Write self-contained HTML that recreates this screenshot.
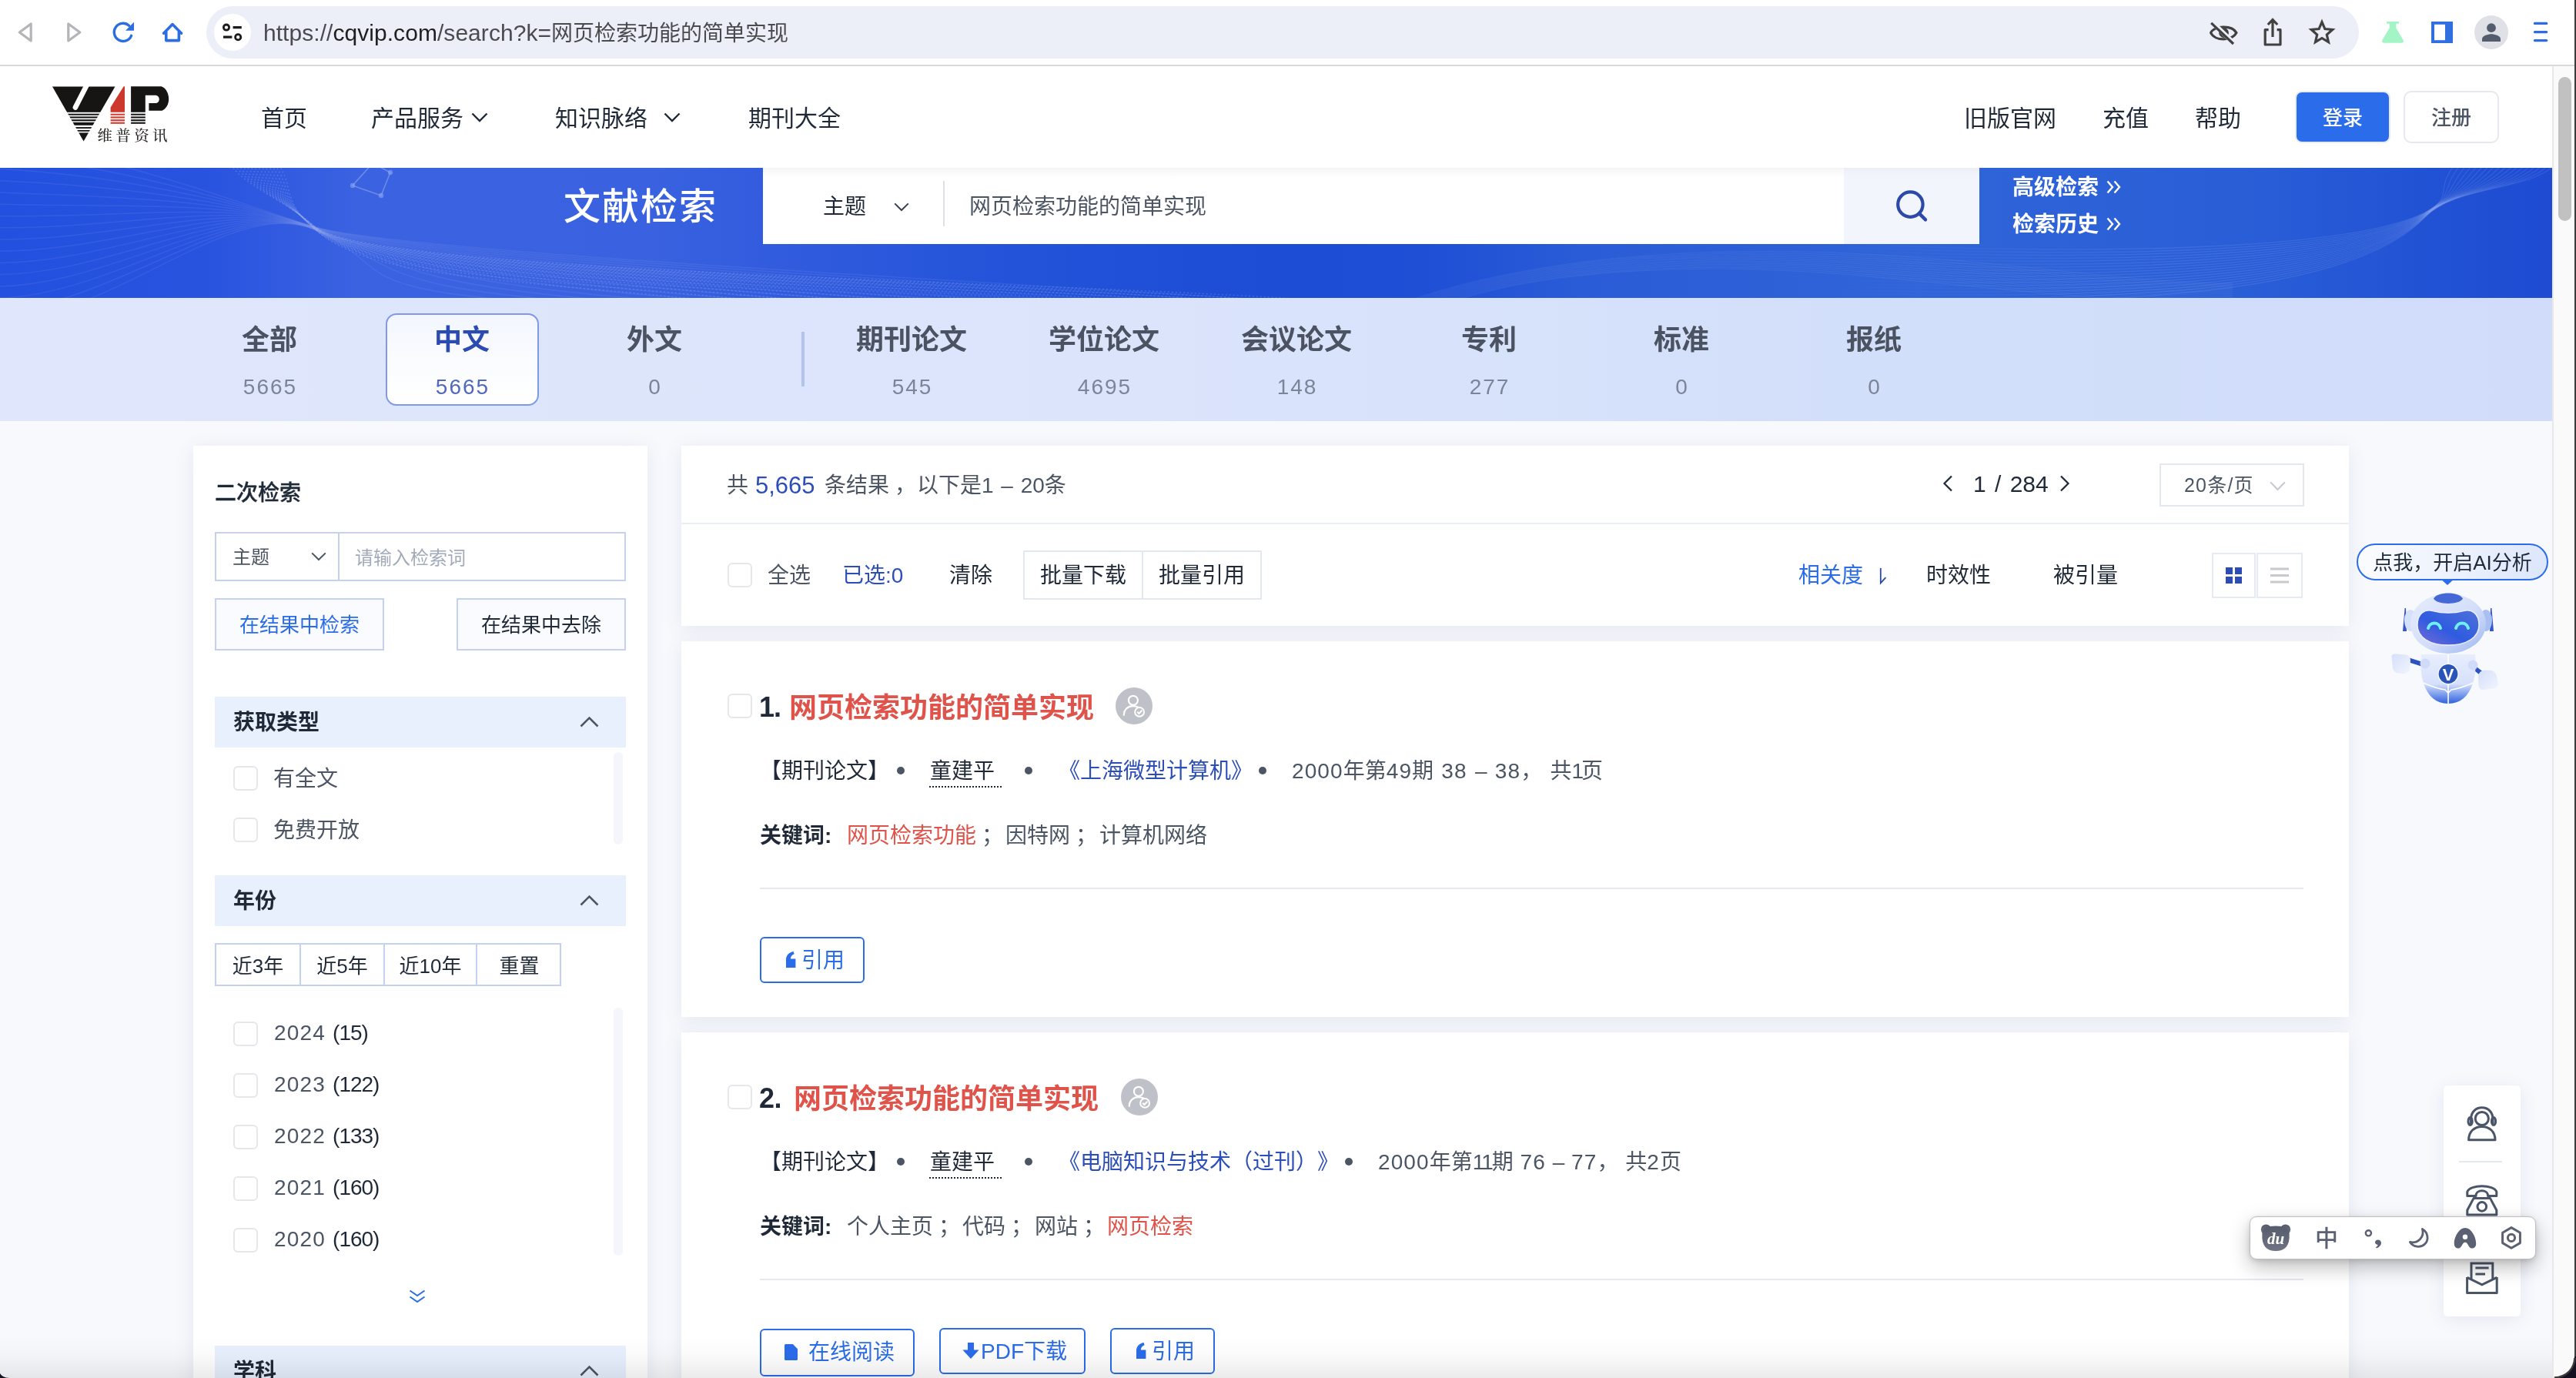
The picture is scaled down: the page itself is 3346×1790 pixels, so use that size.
<!DOCTYPE html>
<html lang="zh-CN">
<head>
<meta charset="utf-8">
<title>文献检索</title>
<style>
*{box-sizing:border-box;margin:0;padding:0}
html,body{width:3346px;height:1790px;overflow:hidden;background:#fff}
body{position:relative;font-family:"Liberation Sans","Noto Sans CJK SC",sans-serif;color:#1f2937;-webkit-font-smoothing:antialiased;text-spacing-trim:space-all;will-change:transform}
.abs{position:absolute}
.t{position:absolute;white-space:nowrap;line-height:40px;transform:translateY(-19px);font-size:28px}
.tc{position:absolute;white-space:nowrap;line-height:40px;transform:translate(-50%,-19px);font-size:28px;text-align:center}
svg{position:absolute;overflow:visible}
.dk{color:#1f2937}.md{color:#4b5563}.bl{color:#2a6cea}.db{color:#2b4eb8}.rd{color:#e0534a}
.n{letter-spacing:1.1px}.sep{margin:0 3px 0 7px}
.b{font-weight:700}.m{font-weight:500;-webkit-text-stroke:.3px currentColor}
.cb{position:absolute;width:32px;height:32px;border:2px solid #e5e7eb;border-radius:6px;background:#fff}
/* page bg */
#page{position:absolute;left:0;top:86px;width:3315px;height:1704px;background:#f8f9fd;overflow:hidden}
#chrome{position:absolute;left:0;top:0;width:3346px;height:86px;background:#fff}
#hdr{position:absolute;left:0;top:0;width:3315px;height:132px;background:#fff}
#banner{position:absolute;left:0;top:132px;width:3315px;height:169px;background:linear-gradient(90deg,#2350df 0%,#2853df 8%,#3a62e1 14%,#3a62e0 25%,#2f5add 32%,#2353d9 40%,#1d4cd5 50%,#1f4fd5 56%,#2a5cd7 62%,#3064d8 75%,#2a5ed7 88%,#2152d4 95%,#1e4bd2 100%);overflow:hidden}
#tabs{position:absolute;left:0;top:301px;width:3315px;height:160px;background:linear-gradient(90deg,#e0e7fc 0%,#dbe4fb 45%,#d2dffa 75%,#d0dcfa 100%)}
.card{position:absolute;background:#fff;box-shadow:0 4px 24px rgba(60,80,140,.10)}
</style>
</head>
<body>

<!-- ================= BROWSER CHROME ================= -->
<div id="chrome">
  <div class="abs" style="left:268px;top:8px;width:2796px;height:68px;border-radius:34px;background:#eceff8"></div>
  <div class="abs" style="left:278px;top:18px;width:48px;height:48px;border-radius:24px;background:#fff"></div>
  <div class="abs" style="left:0;top:84px;width:3346px;height:2px;background:#d9d9d9"></div>
  <div class="t" style="left:342px;top:42px;font-size:30px;color:#4a4b4e;letter-spacing:.05px">https://<span style="color:#1f1f1f">cqvip.com</span>/search?k=<span style="font-size:28px;letter-spacing:0">网页检索功能的简单实现</span></div>
  <svg id="chromeicons" style="left:0;top:0" width="3346" height="86" viewBox="0 0 3346 86" fill="none">
    <!-- back / forward -->
    <path d="M25.3 42 L40.2 31 V53 Z" stroke="#b4b5b8" stroke-width="3.2" stroke-linejoin="round"/>
    <path d="M103.8 42 L88.8 31 V53 Z" stroke="#b4b5b8" stroke-width="3.2" stroke-linejoin="round"/>
    <!-- reload -->
    <path d="M170.6 46.3 A11.6 11.6 0 1 1 167.6 33.2" stroke="#2c6de4" stroke-width="3.4" stroke-linecap="round"/>
    <path d="M174 28.8 V39.8 H163 Z" fill="#2c6de4"/>
    <!-- home -->
    <path d="M212.6 43.2 L224 31.6 L235.6 43.2" stroke="#2c6de4" stroke-width="3.6" stroke-linecap="round" stroke-linejoin="round"/>
    <path d="M215.8 41 V52.6 H232.4 V41" stroke="#2c6de4" stroke-width="3.6" stroke-linejoin="round"/>
    <!-- tune -->
    <circle cx="294" cy="35.6" r="3.6" stroke="#1b1b1b" stroke-width="2.8"/>
    <path d="M302.6 35.6 H313.8 M290 48.2 H301.4" stroke="#1b1b1b" stroke-width="3.2"/>
    <circle cx="309.2" cy="48.2" r="3.6" stroke="#1b1b1b" stroke-width="2.8"/>
    <!-- eye slash -->
    <path d="M2871.6 42.6 C2876 33.4 2899 32 2905 42.6 C2899 53.6 2877 53.6 2871.6 42.6 Z" stroke="#414141" stroke-width="3.2" stroke-linejoin="round"/>
    <circle cx="2888.5" cy="42.5" r="6.4" fill="#414141"/>
    <path d="M2873.4 28.6 L2902.4 57" stroke="#eceff8" stroke-width="6"/>
    <path d="M2872.2 29.8 L2901 57" stroke="#414141" stroke-width="3.2"/>
    <!-- share -->
    <path d="M2946.6 38.6 H2942.2 V58 H2962 V38.6 H2957.6" stroke="#414141" stroke-width="3.2" stroke-linejoin="round"/>
    <path d="M2952 48 V26.4 M2945.8 32 L2952 25.6 L2958.2 32" stroke="#414141" stroke-width="3.2"/>
    <!-- star -->
    <path d="M3016 28.6 L3019.9 37.6 L3029.7 38.5 L3022.3 45 L3024.5 54.6 L3016 49.5 L3007.5 54.6 L3009.7 45 L3002.3 38.5 L3012.1 37.6 Z" stroke="#414141" stroke-width="3.2" stroke-linejoin="miter"/>
    <!-- flask -->
    <path d="M3100 28 H3116 V30.8 H3112.4 V36.6 L3121.6 52 Q3123 55.8 3119 55.8 H3097 Q3093 55.8 3094.4 52 L3103.6 36.6 V30.8 H3100 Z" fill="#a4f5c6"/>
    <!-- side panel -->
    <rect x="3158" y="28" width="28" height="28" fill="#2f6fe0"/>
    <rect x="3162" y="31.8" width="14" height="20.4" fill="#fff"/>
    <!-- profile -->
    <circle cx="3236" cy="42" r="22" fill="#dfe1e6"/>
    <circle cx="3236" cy="36.2" r="5.9" fill="#545d6e"/>
    <path d="M3224 54 V50.4 C3224 46.4 3232 44.2 3236 44.2 C3240 44.2 3248 46.4 3248 50.4 V54 Z" fill="#545d6e"/>
    <!-- menu -->
    <path d="M3292.4 30.4 H3307.8 M3292.4 41.6 H3307.8 M3292.4 52.6 H3307.8" stroke="#2c6de4" stroke-width="3.2" stroke-linecap="round"/>
  </svg>
</div>

<!-- ================= PAGE ================= -->
<div id="page">
  <div id="hdr">
    <!-- logo : local coords = page(60,100) -> hdr(60,14) -->
    <svg style="left:60px;top:14px" width="170" height="95" viewBox="0 0 170 95">
      <defs><clipPath id="vclip"><path d="M7.9 12.3 H89.6 L48.6 83.6 Z"/></clipPath></defs>
      <g clip-path="url(#vclip)" fill="#161514">
        <rect x="0" y="12.3" width="100" height="33.5"/>
        <rect x="0" y="47.7" width="100" height="2.0"/>
        <rect x="0" y="51.4" width="100" height="2.1"/>
        <rect x="0" y="55.2" width="100" height="2.2"/>
        <rect x="0" y="58.9" width="100" height="3.9"/>
        <rect x="0" y="65.1" width="100" height="1.9"/>
        <rect x="0" y="68.9" width="100" height="1.9"/>
        <rect x="0" y="72.4" width="100" height="12"/>
      </g>
      <path d="M53 10 L37.9 39.6" stroke="#fff" stroke-width="6.6" stroke-linecap="round"/>
      <path d="M100.6 12.3 H102 V45.8 H83.6 V39.4 Z" fill="#cc382b"/>
      <g fill="#d23b2e"><rect x="83.6" y="47.7" width="18.4" height="2"/><rect x="83.6" y="51.4" width="18.4" height="2.1"/><rect x="83.6" y="55.2" width="18.4" height="2.1"/><rect x="83.6" y="58.7" width="18.4" height="2.1"/></g>
      <path d="M110.1 12.3 H149.6 C155.5 14.2 159.2 21.4 159.2 28.6 C159.2 35.8 155.6 41.6 150.4 43.8 H133.4 V34.1 H141.6 C144.6 34.1 146.8 31.8 146.8 28.9 C146.8 26 144.6 23.8 141.6 23.8 H128.8 V45.8 H110.1 Z" fill="#161514"/>
      <g fill="#161514"><rect x="110.1" y="47.7" width="18.7" height="2"/><rect x="110.1" y="51.4" width="18.7" height="2.1"/><rect x="110.1" y="55.2" width="18.7" height="2.1"/><rect x="110.1" y="58.7" width="18.7" height="2.1"/></g>
      <text x="66.4" y="83.4" font-family="'Noto Serif CJK SC','Liberation Serif',serif" font-size="19.5" letter-spacing="4.4" font-weight="500" fill="#2a2624">维普资讯</text>
    </svg>
    <div class="t dk" style="left:339px;top:67px;font-size:30px">首页</div>
    <div class="t dk" style="left:482px;top:67px;font-size:30px">产品服务</div>
    <svg style="left:612px;top:60px" width="22" height="13" viewBox="0 0 22 13" fill="none"><path d="M1.5 1.5 L11 11 L20.5 1.5" stroke="#1f2937" stroke-width="2.4"/></svg>
    <div class="t dk" style="left:721px;top:67px;font-size:30px">知识脉络</div>
    <svg style="left:862px;top:60px" width="22" height="13" viewBox="0 0 22 13" fill="none"><path d="M1.5 1.5 L11 11 L20.5 1.5" stroke="#1f2937" stroke-width="2.4"/></svg>
    <div class="t dk" style="left:972px;top:67px;font-size:30px">期刊大全</div>
    <div class="t dk" style="left:2551px;top:67px;font-size:30px">旧版官网</div>
    <div class="t dk" style="left:2731px;top:67px;font-size:30px">充值</div>
    <div class="t dk" style="left:2851px;top:67px;font-size:30px">帮助</div>
    <div class="abs" style="left:2981px;top:32px;width:124px;height:68px;border-radius:9px;background:#e6ebf5"></div>
    <div class="abs" style="left:2983px;top:34px;width:120px;height:64px;border-radius:7px;background:#2a6cea"></div>
    <div class="tc" style="left:3043px;top:66px;font-size:26px;font-weight:500;color:#fff">登录</div>
    <div class="abs" style="left:3122px;top:32px;width:124px;height:68px;border-radius:10px;background:#fff;border:2px solid #e5e8ec"></div>
    <div class="tc md" style="left:3184px;top:66px;font-size:26px;font-weight:500">注册</div>
  </div>
  <div id="banner">
    <svg style="left:0;top:0" width="3315" height="169" viewBox="0 0 3315 169" fill="none">
      <g stroke="#b9c9f8" stroke-opacity=".10" stroke-width="1.5">
      <path d="M-20 -30.0 C140 -24.0 300.0 44.0 410 77.0 C520.0 110.0 1330.0 150.0 1650.0 172.0"/>
      <path d="M-20 -14.7 C140 -8.7 300.0 43.2 410 77.3 C520.0 111.4 1270.0 150.7 1590.0 172.4"/>
      <path d="M-20 0.7 C140 6.7 300.0 42.3 410 77.5 C520.0 112.7 1210.0 151.3 1530.0 172.8"/>
      <path d="M-20 16.0 C140 22.0 300.0 41.5 410 77.8 C520.0 114.1 1150.0 152.0 1470.0 173.2"/>
      <path d="M-20 31.3 C140 37.3 300.0 40.7 410 78.1 C520.0 115.5 1090.0 152.7 1410.0 173.6"/>
      <path d="M-20 46.7 C140 52.7 300.0 39.8 410 78.3 C520.0 116.8 1030.0 153.3 1350.0 174.0"/>
      <path d="M-20 62.0 C140 68.0 300.0 39.0 410 78.6 C520.0 118.2 970.0 154.0 1290.0 174.4"/>
      <path d="M-20 77.3 C140 83.3 300.0 38.2 410 78.9 C520.0 119.6 910.0 154.7 1230.0 174.8"/>
      <path d="M-20 92.7 C140 98.7 300.0 37.3 410 79.1 C520.0 120.9 850.0 155.3 1170.0 175.2"/>
      <path d="M-20 108.0 C140 114.0 300.0 36.5 410 79.4 C520.0 122.3 790.0 156.0 1110.0 175.6"/>
      <path d="M-20 123.3 C140 129.3 300.0 35.7 410 79.7 C520.0 123.7 730.0 156.7 1050.0 176.0"/>
      <path d="M-20 138.7 C140 144.7 300.0 34.8 410 79.9 C520.0 125.0 670.0 157.3 990.0 176.4"/>
      <path d="M-20 154.0 C140 160.0 300.0 34.0 410 80.2 C520.0 126.4 610.0 158.0 930.0 176.8"/>
      <path d="M-20 169.3 C140 175.3 300.0 33.2 410 80.5 C520.0 127.8 550.0 158.7 870.0 177.2"/>
      <path d="M-20 184.7 C140 190.7 300.0 32.3 410 80.7 C520.0 129.1 490.0 159.3 810.0 177.6"/>
      <path d="M-20 200.0 C140 206.0 300.0 31.5 410 81.0 C520.0 130.5 430.0 160.0 750.0 178.0"/>
      </g>
      <g stroke="#c4d2fa" stroke-opacity=".20" stroke-width="1.6" stroke-dasharray="2 3">
      <path d="M300.0 -4 C320.0 25 365.0 38.8 410 77.0 C482.0 138.2 1430.0 148.0 1750.0 175"/>
      <path d="M304.8 -4 C324.8 25 365.0 39.1 410 77.3 C482.0 138.5 1368.5 147.5 1688.5 175"/>
      <path d="M309.5 -4 C329.5 25 365.0 39.4 410 77.6 C482.0 138.8 1306.9 147.1 1626.9 175"/>
      <path d="M314.3 -4 C334.3 25 365.0 39.7 410 77.9 C482.0 139.1 1245.4 146.6 1565.4 175"/>
      <path d="M319.1 -4 C339.1 25 365.0 40.0 410 78.2 C482.0 139.4 1183.8 146.2 1503.8 175"/>
      <path d="M323.8 -4 C343.8 25 365.0 40.3 410 78.5 C482.0 139.7 1122.3 145.7 1442.3 175"/>
      <path d="M328.6 -4 C348.6 25 365.0 40.6 410 78.8 C482.0 140.0 1060.8 145.2 1380.8 175"/>
      <path d="M333.4 -4 C353.4 25 365.0 40.9 410 79.2 C482.0 140.4 999.2 144.8 1319.2 175"/>
      <path d="M338.2 -4 C358.2 25 365.0 41.2 410 79.5 C482.0 140.7 937.7 144.3 1257.7 175"/>
      <path d="M342.9 -4 C362.9 25 365.0 41.5 410 79.8 C482.0 141.0 876.2 143.8 1196.2 175"/>
      <path d="M347.7 -4 C367.7 25 365.0 41.8 410 80.1 C482.0 141.3 814.6 143.4 1134.6 175"/>
      <path d="M352.5 -4 C372.5 25 365.0 42.1 410 80.4 C482.0 141.6 753.1 142.9 1073.1 175"/>
      <path d="M357.2 -4 C377.2 25 365.0 42.4 410 80.7 C482.0 141.9 691.5 142.5 1011.5 175"/>
      <path d="M362.0 -4 C382.0 25 365.0 42.8 410 81.0 C482.0 142.2 630.0 142.0 950.0 175"/>
      </g>
      <g stroke="#b4c8f6" stroke-opacity=".09" stroke-width="1.3">
      <path d="M1820.0 176 C1980.0 118.0 2200.0 100.0 2420.0 112.0 S2760.0 150.0 2900 150.0"/>
      <path d="M1825.5 176 C1983.6 118.9 2202.7 102.0 2421.8 114.7 S2760.0 152.4 2900 152.2"/>
      <path d="M1830.9 176 C1987.3 119.8 2205.5 104.0 2423.6 117.5 S2760.0 154.7 2900 154.4"/>
      <path d="M1836.4 176 C1990.9 120.7 2208.2 106.0 2425.5 120.2 S2760.0 157.1 2900 156.5"/>
      <path d="M1841.8 176 C1994.5 121.6 2210.9 108.0 2427.3 122.9 S2760.0 159.5 2900 158.7"/>
      <path d="M1847.3 176 C1998.2 122.5 2213.6 110.0 2429.1 125.6 S2760.0 161.8 2900 160.9"/>
      <path d="M1852.7 176 C2001.8 123.5 2216.4 112.0 2430.9 128.4 S2760.0 164.2 2900 163.1"/>
      <path d="M1858.2 176 C2005.5 124.4 2219.1 114.0 2432.7 131.1 S2760.0 166.5 2900 165.3"/>
      <path d="M1863.6 176 C2009.1 125.3 2221.8 116.0 2434.5 133.8 S2760.0 168.9 2900 167.5"/>
      <path d="M1869.1 176 C2012.7 126.2 2224.5 118.0 2436.4 136.5 S2760.0 171.3 2900 169.6"/>
      <path d="M1874.5 176 C2016.4 127.1 2227.3 120.0 2438.2 139.3 S2760.0 173.6 2900 171.8"/>
      <path d="M1880.0 176 C2020.0 128.0 2230.0 122.0 2440.0 142.0 S2760.0 176.0 2900 174.0"/>
      </g>
      <defs><linearGradient id="wcg" gradientUnits="userSpaceOnUse" x1="2380" y1="0" x2="2800" y2="0"><stop offset="0" stop-color="#b4c8f6" stop-opacity="0"/><stop offset="1" stop-color="#b4c8f6" stop-opacity="1"/></linearGradient></defs>
      <g stroke="url(#wcg)" stroke-opacity=".13" stroke-width="1.3">
      <path d="M2380 98.0 C2680 112.0 3040 112.0 3150 58.0 C3190 36.0 3160.0 30 3190.0 -6"/>
      <path d="M2380 102.4 C2680 115.8 3040 115.9 3150 58.4 C3190 35.2 3167.6 30 3197.6 -6"/>
      <path d="M2380 106.7 C2680 119.5 3040 119.8 3150 58.7 C3190 34.4 3175.3 30 3205.3 -6"/>
      <path d="M2380 111.1 C2680 123.3 3040 123.6 3150 59.1 C3190 33.5 3182.9 30 3212.9 -6"/>
      <path d="M2380 115.4 C2680 127.1 3040 127.5 3150 59.4 C3190 32.7 3190.6 30 3220.6 -6"/>
      <path d="M2380 119.8 C2680 130.8 3040 131.4 3150 59.8 C3190 31.9 3198.2 30 3228.2 -6"/>
      <path d="M2380 124.1 C2680 134.6 3040 135.3 3150 60.1 C3190 31.1 3205.9 30 3235.9 -6"/>
      <path d="M2380 128.5 C2680 138.4 3040 139.2 3150 60.5 C3190 30.2 3213.5 30 3243.5 -6"/>
      <path d="M2380 132.8 C2680 142.1 3040 143.1 3150 60.8 C3190 29.4 3221.2 30 3251.2 -6"/>
      <path d="M2380 137.2 C2680 145.9 3040 146.9 3150 61.2 C3190 28.6 3228.8 30 3258.8 -6"/>
      <path d="M2380 141.5 C2680 149.6 3040 150.8 3150 61.5 C3190 27.8 3236.5 30 3266.5 -6"/>
      <path d="M2380 145.9 C2680 153.4 3040 154.7 3150 61.9 C3190 26.9 3244.1 30 3274.1 -6"/>
      <path d="M2380 150.2 C2680 157.2 3040 158.6 3150 62.2 C3190 26.1 3251.8 30 3281.8 -6"/>
      <path d="M2380 154.6 C2680 160.9 3040 162.5 3150 62.6 C3190 25.3 3259.4 30 3289.4 -6"/>
      <path d="M2380 158.9 C2680 164.7 3040 166.4 3150 62.9 C3190 24.5 3267.1 30 3297.1 -6"/>
      <path d="M2380 163.3 C2680 168.5 3040 170.2 3150 63.3 C3190 23.6 3274.7 30 3304.7 -6"/>
      <path d="M2380 167.6 C2680 172.2 3040 174.1 3150 63.6 C3190 22.8 3282.4 30 3312.4 -6"/>
      <path d="M2380 172.0 C2680 176.0 3040 178.0 3150 64.0 C3190 22.0 3290.0 30 3320.0 -6"/>
      </g>
      <g stroke="#8ea5ee" stroke-opacity=".6" stroke-width="1.6" fill="#8ea5ee" fill-opacity=".6">
        <path d="M458 23 L495 36 L507 6 L484 -6 Z" fill="none"/>
        <circle cx="458" cy="23" r="3.2" stroke="none"/><circle cx="495" cy="36" r="3.2" stroke="none"/><circle cx="507" cy="6" r="3.2" stroke="none"/>
      </g>
    </svg>
    <div class="t" style="left:732px;top:51px;font-size:48px;font-weight:500;line-height:60px;transform:translateY(-30px);color:#fff;letter-spacing:2px">文献检索</div>
    <div class="abs" style="left:991px;top:0;width:1404px;height:99px;background:linear-gradient(180deg,#f5f5f7 0,#fbfbfc 7px,#fff 14px)"></div>
    <div class="abs" style="left:2395px;top:0;width:176px;height:99px;background:linear-gradient(180deg,#ebedf5 0,#f1f3fb 7px,#f3f5fd 14px)"></div>
    <div class="t dk" style="left:1069px;top:50px;font-size:28px">主题</div>
    <svg style="left:1161px;top:45px" width="20" height="12" viewBox="0 0 20 12" fill="none"><path d="M1.2 1.4 L10 10 L18.8 1.4" stroke="#374151" stroke-width="2"/></svg>
    <div class="abs" style="left:1225px;top:17px;width:2px;height:59px;background:#dde0e6"></div>
    <div class="t md" style="left:1259px;top:50px;font-size:28px">网页检索功能的简单实现</div>
    <svg style="left:2458px;top:24px" width="52" height="52" viewBox="0 0 52 52" fill="none"><circle cx="23.4" cy="23.6" r="16.2" stroke="#2c49a8" stroke-width="4.2"/><path d="M35 35.4 L43 43.4" stroke="#2c49a8" stroke-width="4.4" stroke-linecap="round"/></svg>
    <div class="t b" style="left:2614px;top:25px;font-size:28px;color:#fff">高级检索</div>
    <div class="t b" style="left:2614px;top:73px;font-size:28px;color:#fff">检索历史</div>
    <svg style="left:2736px;top:16px" width="20" height="18" viewBox="0 0 20 18" fill="none"><path d="M1.5 1.5 L8 9 L1.5 16.5 M10.5 1.5 L17 9 L10.5 16.5" stroke="#fff" stroke-width="2.4"/></svg>
    <svg style="left:2736px;top:64px" width="20" height="18" viewBox="0 0 20 18" fill="none"><path d="M1.5 1.5 L8 9 L1.5 16.5 M10.5 1.5 L17 9 L10.5 16.5" stroke="#fff" stroke-width="2.4"/></svg>
  </div>
  <div id="tabs">
    <div class="abs" style="left:501px;top:20px;width:199px;height:120px;border-radius:14px;border:2px solid #7f98ec;background:linear-gradient(180deg,#f3f6fe 0%,#fbfcff 55%,#fff 100%)"></div>
    <div class="abs" style="left:1041px;top:44px;width:4px;height:71px;background:#b6c2ee"></div>
    <div class="tc b" style="left:350px;top:55px;font-size:36px;line-height:50px;transform:translate(-50%,-25px);color:#4b5261">全部</div>
    <div class="tc" style="left:351px;top:115px;font-size:28px;letter-spacing:2px;color:#7b8598">5665</div>
    <div class="tc b" style="left:600px;top:55px;font-size:36px;line-height:50px;transform:translate(-50%,-25px);color:#2b4bb0">中文</div>
    <div class="tc" style="left:601px;top:115px;font-size:28px;letter-spacing:2px;color:#5068c0">5665</div>
    <div class="tc b" style="left:850px;top:55px;font-size:36px;line-height:50px;transform:translate(-50%,-25px);color:#4b5261">外文</div>
    <div class="tc" style="left:851px;top:115px;font-size:28px;letter-spacing:2px;color:#7b8598">0</div>
    <div class="tc b" style="left:1184px;top:55px;font-size:36px;line-height:50px;transform:translate(-50%,-25px);color:#4b5261">期刊论文</div>
    <div class="tc" style="left:1185px;top:115px;font-size:28px;letter-spacing:2px;color:#7b8598">545</div>
    <div class="tc b" style="left:1434px;top:55px;font-size:36px;line-height:50px;transform:translate(-50%,-25px);color:#4b5261">学位论文</div>
    <div class="tc" style="left:1435px;top:115px;font-size:28px;letter-spacing:2px;color:#7b8598">4695</div>
    <div class="tc b" style="left:1684px;top:55px;font-size:36px;line-height:50px;transform:translate(-50%,-25px);color:#4b5261">会议论文</div>
    <div class="tc" style="left:1685px;top:115px;font-size:28px;letter-spacing:2px;color:#7b8598">148</div>
    <div class="tc b" style="left:1934px;top:55px;font-size:36px;line-height:50px;transform:translate(-50%,-25px);color:#4b5261">专利</div>
    <div class="tc" style="left:1935px;top:115px;font-size:28px;letter-spacing:2px;color:#7b8598">277</div>
    <div class="tc b" style="left:2184px;top:55px;font-size:36px;line-height:50px;transform:translate(-50%,-25px);color:#4b5261">标准</div>
    <div class="tc" style="left:2185px;top:115px;font-size:28px;letter-spacing:2px;color:#7b8598">0</div>
    <div class="tc b" style="left:2434px;top:55px;font-size:36px;line-height:50px;transform:translate(-50%,-25px);color:#4b5261">报纸</div>
    <div class="tc" style="left:2435px;top:115px;font-size:28px;letter-spacing:2px;color:#7b8598">0</div>
  </div>
  <div id="side" class="card" style="left:251px;top:493px;width:590px;height:1300px">
    <div class="t m dk" style="left:28px;top:61px;font-size:28px">二次检索</div>
    <div class="abs" style="left:28px;top:112px;width:534px;height:64px;border:2px solid #c5d1f0;background:#fff"></div>
    <div class="abs" style="left:188px;top:112px;width:2px;height:64px;background:#c5d1f0"></div>
    <div class="t md" style="left:51px;top:144px;font-size:24px">主题</div>
    <svg style="left:153px;top:138px" width="20" height="12" viewBox="0 0 20 12" fill="none"><path d="M1.2 1.4 L10 10 L18.8 1.4" stroke="#4b5563" stroke-width="2"/></svg>
    <div class="t" style="left:210px;top:145px;font-size:24px;color:#a3abb9">请输入检索词</div>
    <div class="abs" style="left:28px;top:198px;width:220px;height:68px;border:2px solid #c5d1f0;background:#fafbff"></div>
    <div class="tc bl" style="left:138px;top:232px;font-size:26px">在结果中检索</div>
    <div class="abs" style="left:342px;top:198px;width:220px;height:68px;border:2px solid #c5d1f0;background:#fafbff"></div>
    <div class="tc dk" style="left:452px;top:232px;font-size:26px">在结果中去除</div>
    <div class="abs" style="left:28px;top:326px;width:534px;height:66px;background:#e8f0fe"></div>
    <div class="t b dk" style="left:52px;top:359px;font-size:28px">获取类型</div>
    <svg style="left:502px;top:351px" width="25" height="15" viewBox="0 0 25 15" fill="none"><path d="M1.5 13.5 L12.5 2.5 L23.5 13.5" stroke="#4b5563" stroke-width="2.6"/></svg>
    <div class="cb" style="left:52px;top:416px"></div><div class="t md" style="left:104px;top:432px;font-size:28px">有全文</div>
    <div class="cb" style="left:52px;top:483px"></div><div class="t md" style="left:104px;top:499px;font-size:28px">免费开放</div>
    <div class="abs" style="left:546px;top:398px;width:12px;height:120px;border-radius:6px;background:#f5f6fb"></div>
    <div class="abs" style="left:28px;top:558px;width:534px;height:66px;background:#e8f0fe"></div>
    <div class="t b dk" style="left:52px;top:591px;font-size:28px">年份</div>
    <svg style="left:502px;top:583px" width="25" height="15" viewBox="0 0 25 15" fill="none"><path d="M1.5 13.5 L12.5 2.5 L23.5 13.5" stroke="#4b5563" stroke-width="2.6"/></svg>
    <div class="abs" style="left:28px;top:646px;width:450px;height:56px;border:2px solid #c5d1f0;background:#fff"></div>
    <div class="abs" style="left:138px;top:646px;width:2px;height:56px;background:#c5d1f0"></div>
    <div class="abs" style="left:247px;top:646px;width:2px;height:56px;background:#c5d1f0"></div>
    <div class="abs" style="left:367px;top:646px;width:2px;height:56px;background:#c5d1f0"></div>
    <div class="tc dk" style="left:84px;top:675px;font-size:26px">近3年</div>
    <div class="tc dk" style="left:193.5px;top:675px;font-size:26px">近5年</div>
    <div class="tc dk" style="left:308px;top:675px;font-size:26px">近10年</div>
    <div class="tc dk" style="left:423.5px;top:675px;font-size:26px">重置</div>
    <div class="cb" style="left:52px;top:748px"></div><div class="t md" style="left:105px;top:762px;font-size:28px;letter-spacing:1.2px">2024 <span class="dk" style="letter-spacing:-1px">(15)</span></div>
    <div class="cb" style="left:52px;top:815px"></div><div class="t md" style="left:105px;top:829px;font-size:28px;letter-spacing:1.2px">2023 <span class="dk" style="letter-spacing:-1px">(122)</span></div>
    <div class="cb" style="left:52px;top:882px"></div><div class="t md" style="left:105px;top:896px;font-size:28px;letter-spacing:1.2px">2022 <span class="dk" style="letter-spacing:-1px">(133)</span></div>
    <div class="cb" style="left:52px;top:949px"></div><div class="t md" style="left:105px;top:963px;font-size:28px;letter-spacing:1.2px">2021 <span class="dk" style="letter-spacing:-1px">(160)</span></div>
    <div class="cb" style="left:52px;top:1016px"></div><div class="t md" style="left:105px;top:1030px;font-size:28px;letter-spacing:1.2px">2020 <span class="dk" style="letter-spacing:-1px">(160)</span></div>
    <div class="abs" style="left:546px;top:730px;width:12px;height:322px;border-radius:6px;background:#f5f6fb"></div>
    <svg style="left:280px;top:1096px" width="22" height="18" viewBox="0 0 22 18" fill="none"><path d="M1.5 1.5 L11 8 L20.5 1.5 M1.5 9.5 L11 16 L20.5 9.5" stroke="#2a6cea" stroke-width="2"/></svg>
    <div class="abs" style="left:28px;top:1169px;width:534px;height:66px;background:#e8f0fe"></div>
    <div class="t b dk" style="left:52px;top:1202px;font-size:28px">学科</div>
    <svg style="left:502px;top:1194px" width="25" height="15" viewBox="0 0 25 15" fill="none"><path d="M1.5 13.5 L12.5 2.5 L23.5 13.5" stroke="#4b5563" stroke-width="2.6"/></svg>
  </div>
  <div id="main">
    <div class="card" style="left:885px;top:493px;width:2166px;height:234px"></div>
    <div class="abs" style="left:885px;top:593px;width:2166px;height:2px;background:#e9edf4"></div>
    <div class="t md" style="left:944px;top:544px">共</div><div class="t db" style="left:981px;top:544px;font-size:31px">5,665</div><div class="t md" style="left:1071px;top:544px">条结果</div><div class="t md" style="left:1162px;top:544px">，</div><div class="t md" style="left:1191px;top:544px;word-spacing:2px">以下是1 – 20条</div>
    <svg style="left:2523px;top:531px" width="14" height="22" viewBox="0 0 14 22" fill="none"><path d="M12 1.5 L2.5 11 L12 20.5" stroke="#1f2937" stroke-width="2.2"/></svg>
    <div class="t dk" style="left:2563px;top:542px;font-size:30px;word-spacing:3px">1 / 284</div>
    <svg style="left:2675px;top:531px" width="14" height="22" viewBox="0 0 14 22" fill="none"><path d="M2 1.5 L11.5 11 L2 20.5" stroke="#1f2937" stroke-width="2.2"/></svg>
    <div class="abs" style="left:2805px;top:516px;width:188px;height:56px;border:2px solid #e3e8f0;background:#fff"></div>
    <div class="t md" style="left:2837px;top:543px;font-size:25px;letter-spacing:1.2px">20条/页</div>
    <svg style="left:2948px;top:539px" width="21" height="13" viewBox="0 0 21 13" fill="none"><path d="M1.2 1.4 L10.5 11 L19.8 1.4" stroke="#c3c7cf" stroke-width="2"/></svg>
    <div class="cb" style="left:945px;top:645px"></div>
    <div class="t md" style="left:997px;top:661px">全选</div>
    <div class="t db" style="left:1094px;top:661px">已选:0</div>
    <div class="t dk" style="left:1233px;top:661px">清除</div>
    <div class="abs" style="left:1329px;top:629px;width:310px;height:64px;border:2px solid #e3e8f0;background:#fff"></div>
    <div class="abs" style="left:1483px;top:629px;width:2px;height:64px;background:#e3e8f0"></div>
    <div class="tc dk" style="left:1407px;top:661px">批量下载</div>
    <div class="tc dk" style="left:1561px;top:661px">批量引用</div>
    <div class="t bl" style="left:2336px;top:661px">相关度</div>
    <svg style="left:2438px;top:650px" width="14" height="24" viewBox="2438 736 14 24" fill="none"><path d="M2442.8 738 V757.4 L2449.4 750.2" stroke="#2b4aa8" stroke-width="1.8" stroke-linejoin="miter"/></svg>
    <div class="t dk" style="left:2502px;top:661px">时效性</div>
    <div class="t dk" style="left:2667px;top:661px">被引量</div>
    <div class="abs" style="left:2873px;top:632px;width:57px;height:59px;border:2px solid #e6eaf3;background:#fff"></div>
    <div class="abs" style="left:2931px;top:632px;width:60px;height:59px;border:2px solid #e6eaf3;background:#fff"></div>
    <svg style="left:2891px;top:651px" width="21" height="21" viewBox="0 0 21 21"><g fill="#2b4db5"><rect x="0" y="0" width="9" height="9"/><rect x="12" y="0" width="9" height="9"/><rect x="0" y="12" width="9" height="9"/><rect x="12" y="12" width="9" height="9"/></g></svg>
    <svg style="left:2949px;top:651px" width="24" height="21" viewBox="0 0 24 21"><g fill="#c9c9cd"><rect x="0" y="0.5" width="24" height="3"/><rect x="0" y="9" width="24" height="3"/><rect x="0" y="17.5" width="24" height="3"/></g></svg>
    <div class="card" style="left:885px;top:747px;width:2166px;height:488px"></div>
    <div class="cb" style="left:945px;top:815px"></div>
    <div class="t b dk" style="left:986px;top:833px;font-size:36px;line-height:50px;transform:translateY(-25px);letter-spacing:-1px">1.</div>
    <div class="t b rd" style="left:1025px;top:834px;font-size:36px;line-height:50px;transform:translateY(-25px)">网页检索功能的简单实现</div>
    <svg style="left:1449px;top:807px" width="48" height="48" viewBox="0 0 48 48" fill="none"><circle cx="24" cy="24" r="24" fill="#bfc1c8"/><circle cx="22.9" cy="16.8" r="6" stroke="#fff" stroke-width="2.2"/><path d="M10.8 35.8 C11 28.6 16 24.2 22.6 24.2 C25 24.2 27.2 24.7 29 25.6" stroke="#fff" stroke-width="2.2" stroke-linecap="round"/><circle cx="31.1" cy="31.9" r="5.9" stroke="#fff" stroke-width="2"/><path d="M28.2 31.8 L30.4 34 L34.4 29.8" stroke="#fff" stroke-width="2"/></svg>
    <div class="t dk" style="left:987px;top:915px">【期刊论文】</div>
    <div class="abs" style="left:1165px;top:910px;width:10px;height:10px;border-radius:5px;background:#4b5563"></div>
    <div class="t dk" style="left:1208px;top:915px">童建平</div>
    <div class="abs" style="left:1207px;top:935px;width:94px;height:0;border-top:2px dotted #1f2937"></div>
    <div class="abs" style="left:1331px;top:910px;width:10px;height:10px;border-radius:5px;background:#4b5563"></div>
    <div class="t db" style="left:1375px;top:915px">《上海微型计算机》</div>
    <div class="abs" style="left:1635px;top:910px;width:10px;height:10px;border-radius:5px;background:#4b5563"></div>
    <div class="t md" style="left:1678px;top:915px;word-spacing:2.5px"><span class="n">2000</span>年第<span class="n">49</span>期 <span class="n">38</span> – <span class="n">38</span>， 共<span style="letter-spacing:-3px">1</span>页</div>
    <div class="t b dk" style="left:987px;top:999px">关键词:</div>
    <div class="t md" style="left:1100px;top:999px"><span class="rd">网页检索功能</span><span class="sep">；</span>因特网<span class="sep">；</span>计算机网络</div>
    <div class="abs" style="left:987px;top:1067px;width:2005px;height:2px;background:#e6eaef"></div>
    <div class="abs" style="left:987px;top:1131px;width:136px;height:60px;border:2.5px solid #2a6cea;border-radius:6px;background:#fff"></div>
    <svg style="left:1021px;top:1150px" width="13" height="21" viewBox="0 0 13 21"><path d="M0 21 V11 C0 5 3.4 1.2 9.6 0 L10.6 3.2 C7.6 4.4 6 6.6 5.8 9.6 H12.4 V21 Z" fill="#2a6cea"/></svg>
    <div class="t bl" style="left:1041px;top:1161px">引用</div>
    <div class="card" style="left:885px;top:1255px;width:2166px;height:488px"></div>
    <div class="cb" style="left:945px;top:1323px"></div>
    <div class="t b dk" style="left:986px;top:1341px;font-size:36px;line-height:50px;transform:translateY(-25px);letter-spacing:-.5px">2.</div>
    <div class="t b rd" style="left:1031px;top:1342px;font-size:36px;line-height:50px;transform:translateY(-25px)">网页检索功能的简单实现</div>
    <svg style="left:1456px;top:1315px" width="48" height="48" viewBox="0 0 48 48" fill="none"><circle cx="24" cy="24" r="24" fill="#bfc1c8"/><circle cx="22.9" cy="16.8" r="6" stroke="#fff" stroke-width="2.2"/><path d="M10.8 35.8 C11 28.6 16 24.2 22.6 24.2 C25 24.2 27.2 24.7 29 25.6" stroke="#fff" stroke-width="2.2" stroke-linecap="round"/><circle cx="31.1" cy="31.9" r="5.9" stroke="#fff" stroke-width="2"/><path d="M28.2 31.8 L30.4 34 L34.4 29.8" stroke="#fff" stroke-width="2"/></svg>
    <div class="t dk" style="left:987px;top:1423px">【期刊论文】</div>
    <div class="abs" style="left:1165px;top:1418px;width:10px;height:10px;border-radius:5px;background:#4b5563"></div>
    <div class="t dk" style="left:1208px;top:1423px">童建平</div>
    <div class="abs" style="left:1207px;top:1443px;width:94px;height:0;border-top:2px dotted #1f2937"></div>
    <div class="abs" style="left:1331px;top:1418px;width:10px;height:10px;border-radius:5px;background:#4b5563"></div>
    <div class="t db" style="left:1375px;top:1423px">《电脑知识与技术（过刊）》</div>
    <div class="abs" style="left:1747px;top:1418px;width:10px;height:10px;border-radius:5px;background:#4b5563"></div>
    <div class="t md" style="left:1790px;top:1423px;word-spacing:1px"><span class="n">2000</span>年第<span style="letter-spacing:-2px">11</span>期 <span class="n">76</span> – <span class="n">77</span>， 共<span class="n">2</span>页</div>
    <div class="t b dk" style="left:987px;top:1507px">关键词:</div>
    <div class="t md" style="left:1100px;top:1507px">个人主页<span class="sep">；</span>代码<span class="sep">；</span>网站<span class="sep">；</span><span class="rd">网页检索</span></div>
    <div class="abs" style="left:987px;top:1575px;width:2005px;height:2px;background:#e6eaef"></div>
    <div class="abs" style="left:987px;top:1640px;width:201px;height:62px;border:2.5px solid #2a6cea;border-radius:6px;background:#fff"></div>
    <svg style="left:1019px;top:1660px" width="17" height="21" viewBox="0 0 17 21"><path d="M1.6 0 H10.8 L17 6.2 V19.4 Q17 21 15.4 21 H1.6 Q0 21 0 19.4 V1.6 Q0 0 1.6 0 Z" fill="#2a6cea"/></svg>
    <div class="t bl" style="left:1050px;top:1670px">在线阅读</div>
    <div class="abs" style="left:1220px;top:1639px;width:190px;height:60px;border:2.5px solid #2a6cea;border-radius:6px;background:#fff"></div>
    <svg style="left:1250px;top:1658px" width="22" height="21" viewBox="0 0 22 21"><path d="M7 0 H15 V9.4 H21.6 L11 21 L0.4 9.4 H7 Z" fill="#2a6cea"/></svg>
    <div class="t bl" style="left:1274px;top:1669px">PDF下载</div>
    <div class="abs" style="left:1442px;top:1639px;width:136px;height:60px;border:2.5px solid #2a6cea;border-radius:6px;background:#fff"></div>
    <svg style="left:1476px;top:1658px" width="13" height="21" viewBox="0 0 13 21"><path d="M0 21 V11 C0 5 3.4 1.2 9.6 0 L10.6 3.2 C7.6 4.4 6 6.6 5.8 9.6 H12.4 V21 Z" fill="#2a6cea"/></svg>
    <div class="t bl" style="left:1496px;top:1669px">引用</div>
  </div>
  <div id="floats">
    <svg style="left:3166px;top:664px" width="26" height="12" viewBox="0 0 26 12"><path d="M2 0 L13 10 L24 0 Z" fill="#2a6cea"/></svg>
    <div class="abs" style="left:3061px;top:620px;width:249px;height:48px;border-radius:24px;border:2px solid #2a6cea;background:linear-gradient(100deg,#fbfcff 0%,#eef3fd 45%,#dce6fb 100%)"></div>
    <div class="tc dk" style="left:3185.5px;top:644px;font-size:26px">点我，开启AI分析</div>
    <svg style="left:3100px;top:679px" width="150" height="155" viewBox="3100 765 150 155">
      <defs>
        <linearGradient id="rh" x1="0" y1="0" x2="1" y2="1"><stop offset="0" stop-color="#e6edfd"/><stop offset=".55" stop-color="#d3defa"/><stop offset="1" stop-color="#9db6f0"/></linearGradient>
        <linearGradient id="rv" x1="0" y1="1" x2="1" y2="0"><stop offset="0" stop-color="#7a6bd6"/><stop offset=".45" stop-color="#2f5be0"/><stop offset="1" stop-color="#4f72d8"/></linearGradient>
        <linearGradient id="rb" x1="0" y1="0" x2="0" y2="1"><stop offset="0" stop-color="#e8eefd"/><stop offset=".6" stop-color="#d6e0fb"/><stop offset="1" stop-color="#2f62e0"/></linearGradient>
        <linearGradient id="rhand" x1="0" y1="0" x2="1" y2="1"><stop offset="0" stop-color="#d5dffa"/><stop offset="1" stop-color="#f2f5fe"/></linearGradient>
        <clipPath id="bodyclip"><path d="M3145 850 H3215 C3218 875 3212 914 3180 914 C3148 914 3142 875 3145 850 Z"/></clipPath>
      </defs>
      <!-- arms -->
      <path d="M3128 857 L3150 864" stroke="#2b52c0" stroke-width="6"/>
      <path d="M3212 866 L3230 880" stroke="#2b52c0" stroke-width="6"/>
      <path d="M3106.5 853 Q3106 849 3112 849.5 L3126 850.5 Q3131 852 3131 858 L3130 870 Q3128 875 3122 875 L3114 874.6 Q3109 873 3108 868 Z" fill="url(#rhand)"/>
      <path d="M3219 880 Q3219 871 3228 870.6 L3236 871 Q3241 872 3243 878 L3245 888 Q3245 893 3240 894 L3226 896 Q3220 896 3219.6 891 Z" fill="url(#rhand)"/>
      <!-- body -->
      <path d="M3145 850 H3215 C3218 875 3212 914 3180 914 C3148 914 3142 875 3145 850 Z" fill="url(#rb)"/>
      <g clip-path="url(#bodyclip)"><path d="M3140 884 Q3165 895 3176 896 L3180 900 L3184 896 Q3195 895 3220 884" stroke="#fff" stroke-width="1.6" fill="none"/><path d="M3180 850 V914" stroke="#fff" stroke-width="1.6"/></g>
      <circle cx="3150" cy="862" r="6.5" fill="#cfdbf9"/><circle cx="3212" cy="864" r="6.5" fill="#cfdbf9"/>
      <circle cx="3180" cy="875.5" r="13.6" fill="#fff"/><circle cx="3180" cy="875.5" r="12.4" fill="#2b54b8"/>
      <text x="3180" y="883.6" text-anchor="middle" font-family="'Liberation Sans',sans-serif" font-weight="700" font-size="22" fill="#fff">V</text>
      <!-- ears -->
      <path d="M3125 790 L3126 820 L3121 820 L3123.6 790 Z" fill="#3556c8"/>
      <path d="M3235 790 L3234 820 L3239 820 L3236.4 790 Z" fill="#3556c8"/>
      <ellipse cx="3131" cy="806" rx="8" ry="14" fill="#d5e0fa"/><ellipse cx="3229" cy="806" rx="8" ry="14" fill="#a9bff2"/>
      <!-- head -->
      <ellipse cx="3180" cy="810" rx="49" ry="39" fill="url(#rh)"/>
      <path d="M3161 777.5 C3166 768 3194 768 3199 777.5 C3195 786 3165 786 3161 777.5 Z" fill="#4668d6"/>
      <path d="M3140 812 C3140 796 3150 791 3160 793.6 C3172 797 3188 797 3200 793.6 C3210 791 3220 796 3220 812 C3220 828 3204 838 3180 838 C3156 838 3140 828 3140 812 Z" fill="url(#rv)" stroke="#eef2fe" stroke-width="1.4"/>
      <path d="M3154 816 A8.2 8.2 0 0 1 3170 816" stroke="#6ff0f0" stroke-width="4" fill="none" stroke-linecap="round"/>
      <path d="M3190 816 A8.2 8.2 0 0 1 3206 816" stroke="#6ff0f0" stroke-width="4" fill="none" stroke-linecap="round"/>
    </svg>
    <div class="abs" style="left:3174px;top:1324px;width:100px;height:300px;border-radius:5px;background:#fff;box-shadow:0 4px 22px rgba(60,80,140,.10)"></div>
    <svg style="left:3174px;top:1324px" width="100" height="300" viewBox="3174 1410 100 300" fill="none" stroke="#4b5568" stroke-width="3">
      <circle cx="3223.8" cy="1453" r="8.6"/>
      <path d="M3209.6 1461 V1453.6 C3209.6 1444.6 3215.6 1438.8 3223.8 1438.8 C3232 1438.8 3238 1444.6 3238 1453.6 V1461"/>
      <ellipse cx="3208.6" cy="1456.6" rx="2.6" ry="5"/><ellipse cx="3239" cy="1456.6" rx="2.6" ry="5"/>
      <path d="M3206.6 1480.8 C3206.6 1470 3214 1463.4 3223.8 1463.4 C3233.6 1463.4 3241 1470 3241 1480.8 Z" stroke-linejoin="round"/>
      <path d="M3194 1509 H3250" stroke="#e3e9f1" stroke-width="2"/>
      <path d="M3204.8 1553.4 V1548 C3208 1538.4 3239.6 1538.4 3242.8 1548 V1553.4 H3231.6 C3231.6 1544.6 3216 1544.6 3216 1553.4 Z" stroke-linejoin="round"/>
      <path d="M3213 1556.6 H3234.6 L3242.8 1572 V1578 H3204.8 V1572 Z" stroke-linejoin="round"/>
      <circle cx="3223.8" cy="1567.4" r="5.8"/>
      <path d="M3204.6 1659 V1679.6 H3243.2 V1659" stroke-linejoin="round"/>
      <path d="M3204.6 1659.4 L3223.9 1668.8 L3243.2 1659.4"/>
      <path d="M3210 1661.6 V1641 H3237.8 V1661.6"/>
      <path d="M3215.4 1647 H3232.6 M3215.4 1655 H3228"/>
    </svg>
    <div class="abs" style="left:2922px;top:1494px;width:372px;height:56px;border-radius:9px;background:#fff;border:1.5px solid #bdbdc2;box-shadow:0 10px 26px rgba(0,0,0,.26),0 2px 6px rgba(0,0,0,.12)"></div>
    <svg style="left:2922px;top:1494px" width="372" height="56" viewBox="2922 1580 372 56" fill="none">
      <defs><linearGradient id="bear" x1="0" y1="0" x2="0" y2="1"><stop offset="0" stop-color="#565b6b"/><stop offset="1" stop-color="#6f7484"/></linearGradient></defs>
      <circle cx="2943.4" cy="1597" r="6.6" fill="url(#bear)"/><circle cx="2968.6" cy="1597" r="6.6" fill="url(#bear)"/>
      <path d="M2938.4 1603 C2938.4 1595 2945 1592.4 2956 1592.4 C2967 1592.4 2973.6 1595 2973.6 1603 C2974.6 1618 2968 1625 2956 1625 C2944 1625 2937.4 1618 2938.4 1603 Z" fill="url(#bear)"/>
      <text x="2956" y="1616.4" text-anchor="middle" font-family="'Liberation Serif',serif" font-style="italic" font-weight="700" font-size="21" fill="#fff">du</text>
      <text x="3022" y="1618.6" text-anchor="middle" font-family="'Noto Sans CJK SC',sans-serif" font-weight="500" font-size="30" fill="#5b6172">中</text>
      <circle cx="3076.4" cy="1601.8" r="3.6" stroke="#5b6172" stroke-width="2.4"/>
      <path d="M3088.6 1610.4 C3091.4 1610.4 3093 1612.4 3093 1614.6 C3093 1617.6 3090.6 1620 3087 1621.6 L3086 1620.2 C3087.8 1619 3088.6 1618 3088.6 1617 C3086.6 1616.8 3085 1615.6 3085 1613.8 C3085 1611.8 3086.6 1610.4 3088.6 1610.4 Z" fill="#5b6172"/>
      <path d="M3146.4 1596.4 C3153.6 1600.6 3155.4 1610.4 3149.6 1616 C3144 1621.4 3134.6 1620 3130.4 1613.4 C3140.6 1615.6 3149.6 1607 3146.4 1596.4 Z" stroke="#5b6172" stroke-width="2.8" stroke-linejoin="round"/>
      <path d="M3202 1595 C3209.4 1595 3216.2 1606 3216.2 1615.4 C3216.2 1619.6 3213.6 1621.6 3210.6 1621.6 C3206.2 1621.6 3206 1613.8 3202 1613.8 C3198 1613.8 3197.8 1621.6 3193.4 1621.6 C3190.4 1621.6 3187.8 1619.6 3187.8 1615.4 C3187.8 1606 3194.6 1595 3202 1595 Z" fill="#5b6172"/>
      <circle cx="3202" cy="1606.8" r="3.2" fill="#fff"/>
      <path d="M3262 1594.6 L3273.4 1601.2 V1614.6 L3262 1621.2 L3250.6 1614.6 V1601.2 Z" stroke="#5b6172" stroke-width="3" stroke-linejoin="round"/>
      <circle cx="3262" cy="1607.9" r="4.6" stroke="#5b6172" stroke-width="3"/>
    </svg>
  </div>
</div>

<!-- ================= SCROLLBAR + WINDOW EDGE ================= -->
<div id="sbar" class="abs" style="left:3315px;top:86px;width:31px;height:1704px;background:#fafafa;border-left:2px solid #e8e8e8">
  <div class="abs" style="left:6px;top:14px;width:17px;height:187px;border-radius:9px;background:#c1c1c1"></div>
</div>
<div class="abs" style="left:0;top:1736px;width:3315px;height:54px;background:linear-gradient(180deg,rgba(0,0,0,0) 0%,rgba(0,0,0,.02) 45%,rgba(0,0,0,.08) 100%);pointer-events:none"></div>
<div class="abs" style="left:3344px;top:0;width:2px;height:1790px;background:#3b3b3b"></div>
<svg style="left:3316px;top:1762px" width="30" height="28" viewBox="0 0 30 28"><path d="M30 0 V28 H0 C16 28 28 18 28 0 Z" fill="#15101f"/><path d="M2 27.4 C17 26.6 27.4 17 28.4 2" stroke="#3b3b3b" stroke-width="2.4" fill="none"/></svg>
<svg style="left:0;top:1784px" width="12" height="6" viewBox="0 0 12 6"><path d="M0 0 V6 H12 C6 5.6 2 3.6 0 0 Z" fill="#15101f"/></svg>

<script>(function(){var w=window.innerWidth,d=window.devicePixelRatio||1;if(w&&d>1.01&&Math.abs(w*d-3346)<6){var k=w/3346,b=document.body,h=document.documentElement;b.style.transformOrigin="0 0";b.style.transform="scale("+k+")";h.style.width=w+"px";h.style.height=Math.round(1790*k)+"px";}})();</script>
</body>
</html>
